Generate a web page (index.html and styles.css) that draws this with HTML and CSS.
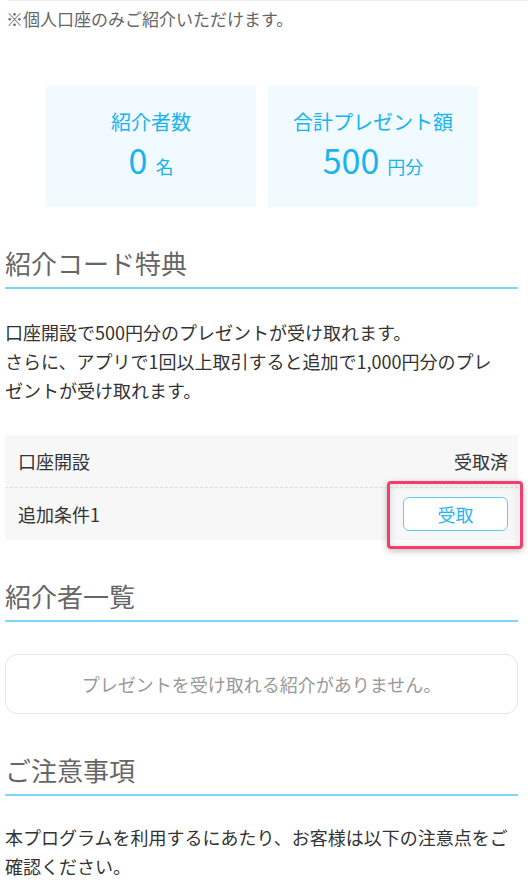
FILE: index.html
```html
<!DOCTYPE html>
<html lang="ja">
<head>
  <meta charset="UTF-8">
  <title>紹介プログラム</title>
  <meta name="viewport" content="width=device-width, initial-scale=1.0">
  <link rel="stylesheet" href="styles.css">
</head>
<body>
  <div class="page">
    <div class="top-rule"></div>
    <p class="note">※個人口座のみご紹介いただけます。</p>

    <div class="stats">
      <div class="stat">
        <div class="stat-label">紹介者数</div>
        <div class="stat-value">0<span class="stat-unit">名</span></div>
      </div>
      <div class="stat">
        <div class="stat-label">合計プレゼント額</div>
        <div class="stat-value">500<span class="stat-unit">円分</span></div>
      </div>
    </div>

    <h2 class="section-title">紹介コード特典</h2>
    <p class="text">口座開設で500円分のプレゼントが受け取れます。<br>さらに、アプリで1回以上取引すると追加で1,000円分のプレゼントが受け取れます。</p>

    <div class="bonus-table">
      <div class="bonus-row">
        <span>口座開設</span>
        <span>受取済</span>
      </div>
      <div class="bonus-row">
        <span>追加条件1</span>
        <span class="btn-wrap">
          <button class="btn-receive">受取</button>
          <span class="highlight"></span>
        </span>
      </div>
    </div>

    <h2 class="section-title">紹介者一覧</h2>
    <div class="empty-box">プレゼントを受け取れる紹介がありません。</div>

    <h2 class="section-title">ご注意事項</h2>
    <p class="text notice">本プログラムを利用するにあたり、お客様は以下の注意点をご確認ください。</p>
  </div>
</body>
</html>
```

FILE: styles.css
```css
* {
  margin: 0; padding: 0; box-sizing: border-box;
}
body {
  background: #fff;
  color: #333;
  font-family: "Noto Sans CJK JP", "Noto Sans", sans-serif;
}
.page {
  padding: 0 10px 0 5px;
  overflow: hidden;
}
.top-rule {
  height: 1px; background: #eee; margin-left: 3px; margin-right: -10px;
}
.note {
  font-size: 17px; line-height: 24px; color: #666;
  margin-top: 6px; padding-left: 1px;
}

/* stats boxes */
.stats {
  display: flex; gap: 12px;
  margin-top: 55px; padding-left: 41px; padding-right: 30px;
}
.stat {
  width: 210px; height: 121px;
  background: #f0faff;
  color: #1ab3ef;
  display: flex; flex-direction: column; align-items: center; justify-content: center;
}
.stat-label { font-size: 20px; line-height: 30px; }
.stat-value { font-size: 34px; line-height: 40px; margin-top: 3px; }
.stat-unit { font-size: 18px; margin-left: 8px; }

/* sections */
.section-title {
  font-size: 26px; font-weight: normal; line-height: 36px;
  color: #666;
  margin-top: 38px; padding-bottom: 6px;
  border-bottom: 2px solid #7dd6f7;
}
.text {
  font-size: 18px; line-height: 29px; color: #333;
  margin-top: 29px; max-width: 500px;
}
.notice { margin-top: 27px; max-width: none; }

.bonus-table {
  margin-top: 30px;
  background: #f7f7f7;
}
.bonus-row {
  display: flex; justify-content: space-between; align-items: center;
  height: 52px; padding: 0 10px 0 13px;
  font-size: 18px; color: #333;
}
.bonus-row + .bonus-row {
  border-top: 1px dashed #e0e0e0;
  height: 53px;
}
.btn-wrap { position: relative; display: flex; }
.btn-receive {
  width: 105px; height: 34px;
  background: #fff; color: #29b6f0;
  border: 1px solid #5ccdf5; border-radius: 6px;
  font-family: inherit; font-size: 18px;
}
.highlight {
  position: absolute; left: -16px; top: -16px; right: -15px; bottom: -18px;
  border: 3px solid #f23d6e; border-radius: 4px;
  box-shadow: 0 2px 6px rgba(0, 0, 0, 0.25), inset 0 0 8px rgba(0, 0, 0, 0.12);
}

.empty-box {
  margin-top: 32px; height: 60px;
  border: 1px solid #e6e6e6; border-radius: 12px;
  display: flex; align-items: center; justify-content: center;
  font-size: 18px; color: #999;
}
```
